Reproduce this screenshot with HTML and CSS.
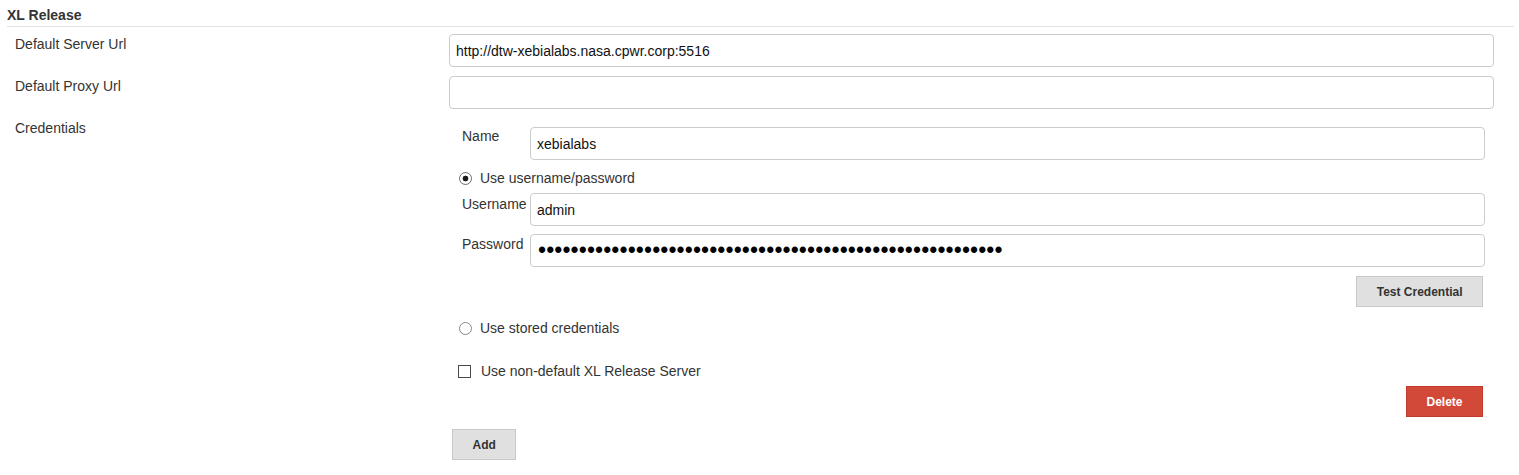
FILE: index.html
```html
<!DOCTYPE html>
<html lang="en">
<head>
<meta charset="utf-8">
<title>XL Release</title>
<link rel="stylesheet" href="styles.css">
</head>
<body>
<div class="section">
  <div class="section-header">XL Release</div>
  <div class="form">
    <div class="row">
      <div class="row-label">Default Server Url</div>
      <div class="row-field"><input class="text-input" type="text" value="http://dtw-xebialabs.nasa.cpwr.corp:5516"></div>
    </div>
    <div class="row">
      <div class="row-label">Default Proxy Url</div>
      <div class="row-field"><input class="text-input" type="text" value=""></div>
    </div>
    <div class="row">
      <div class="row-label">Credentials</div>
      <div class="row-field">
        <div class="repeated">
          <div class="sub-row sub-name">
            <div class="sub-label">Name</div>
            <input class="text-input" type="text" value="xebialabs">
          </div>
          <label class="choice choice-userpass"><input class="radio" type="radio" name="cred" checked><span>Use username/password</span></label>
          <div class="sub-row sub-username">
            <div class="sub-label">Username</div>
            <input class="text-input" type="text" value="admin">
          </div>
          <div class="sub-row sub-password">
            <div class="sub-label">Password</div>
            <input class="text-input password-input" type="password" value="xxxxxxxxxxxxxxxxxxxxxxxxxxxxxxxxxxxxxxxxxxxxxxxxxxxxxxxxx">
          </div>
          <div class="button-row button-row-test">
            <button class="btn" type="button">Test Credential</button>
          </div>
          <label class="choice choice-stored"><input class="radio" type="radio" name="cred"><span>Use stored credentials</span></label>
          <label class="choice choice-server"><input class="checkbox" type="checkbox"><span>Use non-default XL Release Server</span></label>
          <div class="button-row button-row-delete">
            <button class="btn btn-danger" type="button">Delete</button>
          </div>
        </div>
        <div class="add-row">
          <button class="btn" type="button">Add</button>
        </div>
      </div>
    </div>
  </div>
</div>
</body>
</html>
```

FILE: styles.css
```css
html, body {
  margin: 0;
  padding: 0;
  background: #fff;
}

body {
  font-family: "Liberation Sans", Arial, sans-serif;
  font-size: 14px;
  color: #333;
}

.section-header {
  margin: 0 5px 0 7px;
  padding: 7px 0 3px;
  line-height: 16px;
  font-weight: bold;
  color: #333;
  border-bottom: 1px solid #e3e3e3;
}

.form {
  padding-top: 7px;
}

.row {
  display: grid;
  grid-template-columns: 434px 1045px;
  padding-left: 15px;
  margin-bottom: 9px;
}

.row-label {
  padding-top: 2px;
  line-height: 16px;
}

.text-input {
  display: block;
  width: 100%;
  height: 33px;
  box-sizing: border-box;
  margin: 0;
  border: 1px solid #ccc;
  border-radius: 4px;
  padding: 0 6px;
  font-family: "Liberation Sans", Arial, sans-serif;
  font-size: 14px;
  color: #111;
  background: #fff;
  outline: none;
}

.password-input {
  font-size: 23px;
  letter-spacing: 0.1px;
  padding-left: 7px;
  color: #000;
}

.repeated {
  padding: 9px 9px 0 10px;
}

.sub-row {
  display: grid;
  grid-template-columns: 71px 1fr;
  align-items: start;
}

.sub-label {
  padding-left: 3px;
  line-height: 16px;
}

.sub-name .sub-label { padding-top: 1px; }

.sub-username {
  margin-top: 6px;
}
.sub-username .sub-label { padding-top: 3px; }

.sub-password {
  margin-top: 8px;
}
.sub-password .sub-label { padding-top: 2px; }

.choice {
  display: flex;
  align-items: center;
  height: 17px;
  line-height: 17px;
}

.choice-userpass { margin-top: 10px; }
.choice-stored { margin-top: 13px; }
.choice-server { margin-top: 26px; }

.radio {
  appearance: none;
  -webkit-appearance: none;
  width: 13px;
  height: 13px;
  margin: 0 8px 0 0;
  border: 1px solid #8a8a8a;
  border-radius: 50%;
  background: #fff;
  box-sizing: border-box;
  flex: none;
}

.radio:checked {
  background: radial-gradient(circle, #1a1a1a 0 2.6px, #fff 3.2px);
  border-color: #6e6e6e;
}

.checkbox {
  appearance: none;
  -webkit-appearance: none;
  width: 13px;
  height: 13px;
  margin: 0 10px 0 -1px;
  border: 1px solid #4a4a4a;
  background: #fff;
  box-sizing: border-box;
  flex: none;
}

.button-row {
  display: flex;
  justify-content: flex-end;
  padding-right: 2px;
}

.button-row-test { margin-top: 9px; }
.button-row-delete { margin-top: 6px; }

.btn {
  height: 31px;
  margin: 0;
  padding: 0 19.5px;
  border: 1px solid #c9c9c9;
  border-radius: 0;
  background: #e0e0e0;
  font-family: "Liberation Sans", Arial, sans-serif;
  font-size: 12px;
  font-weight: bold;
  color: #333;
  cursor: pointer;
}

.btn-danger {
  background: #d24939;
  border-color: #c13b2c;
  color: #fff;
}

.add-row {
  margin-top: 12px;
  padding-left: 3px;
}
```
